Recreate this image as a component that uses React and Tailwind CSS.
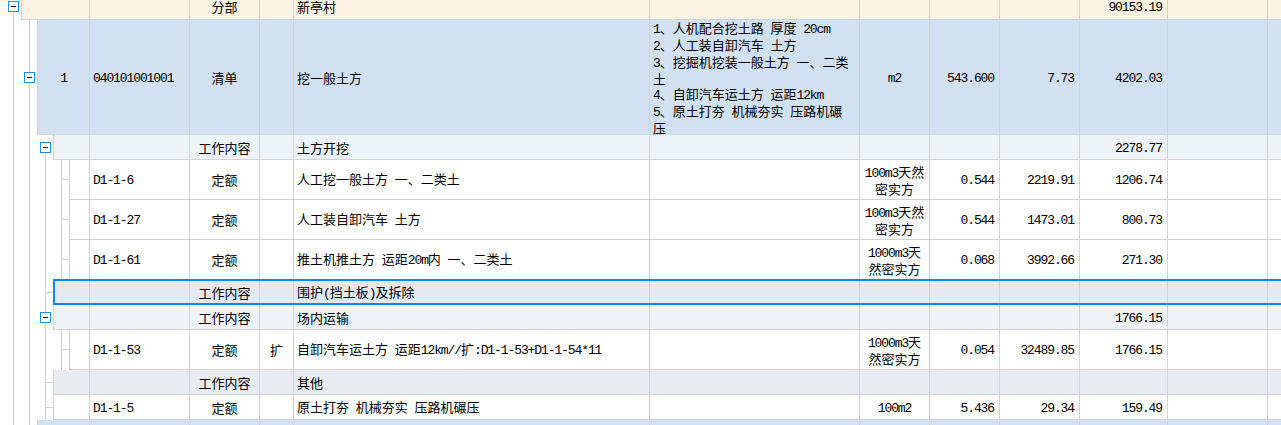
import React from 'react';

// CJK runs keep the CJK face; Latin runs get a narrow mono so half-width chars match
const CJK = /([\u2E80-\u9FFF\u3000-\u303F\uFF00-\uFFEF]+)/;

function Txt({ s }) {
  return s.split(CJK).map((p, i) => {
    if (!p) return null;
    if (i % 2) return <span key={i}>{p}</span>;
    return (
      <span key={i} className="font-['Liberation_Mono',monospace] tracking-[-1.1px]">
        {p}
      </span>
    );
  });
}

function Gutter({ w, h, lines = [], half, toggle, tick }) {
  const mid = Math.floor((h - 1) / 2);
  return (
    <svg width={w} height={h} className="block shrink-0">
      {lines.map((x) => (
        <rect key={x} x={x} y={0} width={1} height={h} fill="#d3d3d3" />
      ))}
      {half != null && <rect x={half} y={mid} width={1} height={h - mid} fill="#d3d3d3" />}
      {tick != null && <rect x={tick} y={mid} width={w - tick} height={1} fill="#d3d3d3" />}
      {toggle != null && (
        <g>
          <rect x={toggle - 4.5} y={mid - 4.5} width={10} height={10} fill="#fff" stroke="#1c92e0" />
          <rect x={toggle - 2} y={mid} width={5} height={1} fill="#111" />
        </g>
      )}
    </svg>
  );
}

const COL_W = ['', 'w-[100px]', 'w-[70px]', 'w-[34px]', 'w-[356px]', 'w-[210px]', 'w-[70px]', 'w-[70px]', 'w-[80px]', 'w-[88px]', 'w-[100px]', 'w-[100px]'];
const A_W = { 21: 'w-[68px]', 37: 'w-[52px]', 53: 'w-[36px]', 69: 'w-[20px]' };
const CENTER = 'justify-center text-center';
const LEFT = 'justify-start pl-[3px]';
const RIGHT = 'justify-end pr-[5px]';
const ALIGN = [CENTER, LEFT, CENTER, CENTER, LEFT, LEFT, CENTER, RIGHT, RIGHT, RIGHT, '', ''];

const UNIT_100 = ['100m3天然', '密实方'];
const UNIT_1000 = ['1000m3天', '然密实方'];

const rows = [
  {
    L: 21, h: 26, hc: 'h-[26px]', bg: 'bg-[#faf3e1]',
    g: { half: 13, toggle: 13, tick: 13 },
    c: { 2: '分部', 4: '新亭村', 9: '90153.19' },
  },
  {
    L: 37, h: 115, hc: 'h-[115px]', bg: 'bg-[#d2e1f2]',
    g: { lines: [13, 29], toggle: 29, tick: 29 },
    c: {
      0: '1', 1: '040101001001', 2: '清单', 4: '挖一般土方',
      5: [
        '1、人机配合挖土路 厚度 20cm',
        '2、人工装自卸汽车 土方',
        '3、挖掘机挖装一般土方 一、二类',
        '土',
        '4、自卸汽车运土方 运距12km',
        '5、原土打夯 机械夯实 压路机碾',
        '压',
      ],
      6: 'm2', 7: '543.600', 8: '7.73', 9: '4202.03',
    },
  },
  {
    L: 53, h: 25, hc: 'h-[25px]', bg: 'bg-[#eef3f8]',
    g: { lines: [13, 29], half: 45, toggle: 45, tick: 45 },
    c: { 2: '工作内容', 4: '土方开挖', 9: '2278.77' },
  },
  {
    L: 69, h: 40, hc: 'h-[40px]', bg: 'bg-white',
    g: { lines: [13, 29, 45, 61], tick: 61 },
    c: { 1: 'D1-1-6', 2: '定额', 4: '人工挖一般土方 一、二类土', 6: UNIT_100, 7: '0.544', 8: '2219.91', 9: '1206.74' },
  },
  {
    L: 69, h: 40, hc: 'h-[40px]', bg: 'bg-white',
    g: { lines: [13, 29, 45, 61], tick: 61 },
    c: { 1: 'D1-1-27', 2: '定额', 4: '人工装自卸汽车 土方', 6: UNIT_100, 7: '0.544', 8: '1473.01', 9: '800.73' },
  },
  {
    L: 69, h: 40, hc: 'h-[40px]', bg: 'bg-white',
    g: { lines: [13, 29, 45, 61], tick: 61 },
    c: { 1: 'D1-1-61', 2: '定额', 4: '推土机推土方 运距20m内 一、二类土', 6: UNIT_1000, 7: '0.068', 8: '3992.66', 9: '271.30' },
  },
  {
    L: 53, h: 25, hc: 'h-[25px]', bg: 'bg-[#e5e9ef]', sel: true,
    g: { lines: [13, 29, 45], tick: 45 },
    c: { 2: '工作内容', 4: '围护(挡土板)及拆除' },
  },
  {
    L: 53, h: 25, hc: 'h-[25px]', bg: 'bg-[#eef3f8]',
    g: { lines: [13, 29, 45], toggle: 45, tick: 45 },
    c: { 2: '工作内容', 4: '场内运输', 9: '1766.15' },
  },
  {
    L: 69, h: 40, hc: 'h-[40px]', bg: 'bg-white',
    g: { lines: [13, 29, 45, 61], tick: 61 },
    c: { 1: 'D1-1-53', 2: '定额', 3: '扩', 4: '自卸汽车运土方 运距12km//扩:D1-1-53+D1-1-54*11', 6: UNIT_1000, 7: '0.054', 8: '32489.85', 9: '1766.15' },
  },
  {
    L: 53, h: 25, hc: 'h-[25px]', bg: 'bg-[#e8ecf1]',
    g: { lines: [13, 29, 45], tick: 45 },
    c: { 2: '工作内容', 4: '其他' },
  },
  {
    L: 53, h: 25, hc: 'h-[25px]', bg: 'bg-white',
    g: { lines: [13, 29, 45], tick: 45 },
    c: { 1: 'D1-1-5', 2: '定额', 4: '原土打夯 机械夯实 压路机碾压', 6: '100m2', 7: '5.436', 8: '29.34', 9: '159.49' },
  },
  {
    L: 37, h: 115, hc: 'h-[115px]', bg: 'bg-[#d2e1f2]',
    g: { lines: [13, 29], toggle: 29, tick: 29 },
    c: {},
  },
];

function Cell({ idx, L, value }) {
  const w = idx === 0 ? A_W[L] : COL_W[idx];
  return (
    <div className={`${w} ${ALIGN[idx]} flex shrink-0 items-center border-r border-[#d3d3d3]`}>
      {Array.isArray(value) ? (
        <div>
          {value.map((line, i) => (
            <div key={i} className="whitespace-nowrap">
              <Txt s={line} />
            </div>
          ))}
        </div>
      ) : value ? (
        <span className="whitespace-nowrap">
          <Txt s={value} />
        </span>
      ) : null}
    </div>
  );
}

export default function App() {
  return (
    <div className="h-[425px] w-[1281px] overflow-hidden bg-white font-['Noto_Sans_CJK_SC',sans-serif] text-[13px] leading-[15px] text-black">
      <div className="-mt-[6px] w-[1368px]">
        {rows.map((r, i) => (
          <div key={i} className={`flex ${r.hc}`}>
            <Gutter w={r.L} h={r.h} {...r.g} />
            <div className={`relative flex border-b border-l border-[#d3d3d3] ${r.bg}`}>
              {COL_W.map((_, idx) => (
                <Cell key={idx} idx={idx} L={r.L} value={r.c[idx]} />
              ))}
              {r.sel && (
                <div className="pointer-events-none absolute -top-px -bottom-px -left-px right-0 z-10 border-2 border-[#0b86ff]" />
              )}
            </div>
          </div>
        ))}
      </div>
    </div>
  );
}
